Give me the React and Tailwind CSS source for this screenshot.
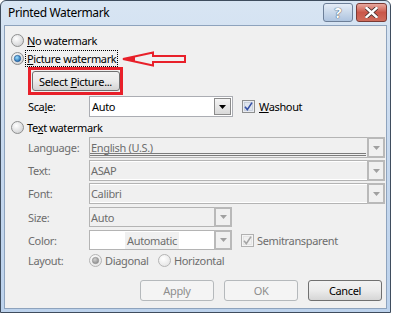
import React from "react";

const font = { fontFamily: '"Noto Sans", "Segoe UI", sans-serif' };

const Radio = ({ id, checked, disabled }) => (
  <svg width="13" height="13" viewBox="0 0 13 13" className="shrink-0">
    <defs>
      <radialGradient id={id + "bg"} cx="40%" cy="35%" r="70%">
        <stop offset="0" stopColor="#ffffff" />
        <stop offset="1" stopColor={disabled ? "#e4e4e4" : "#cfd0d2"} />
      </radialGradient>
      <radialGradient id={id + "dot"} cx="40%" cy="35%" r="70%">
        <stop offset="0" stopColor={disabled ? "#d0d0d0" : "#9ee0ff"} />
        <stop offset="1" stopColor={disabled ? "#8a8a8a" : "#145fa8"} />
      </radialGradient>
    </defs>
    <circle cx="6.5" cy="6.5" r="6" fill={`url(#${id}bg)`} stroke={disabled ? "#b4b4b4" : "#8e8f8f"} />
    {checked && <circle cx="6.5" cy="6.5" r="3.2" fill={`url(#${id}dot)`} stroke={disabled ? "#8f8f8f" : "#1b4f8a"} strokeWidth="0.6" />}
  </svg>
);

const Check = ({ disabled }) => (
  <svg width="13" height="13" viewBox="0 0 13 13" className="shrink-0">
    <rect x="0.5" y="0.5" width="12" height="12" fill={disabled ? "#f4f4f4" : "#e9ecf2"} stroke={disabled ? "#b1b1b1" : "#8e8f8f"} />
    <rect x="2.5" y="2.5" width="8" height="8" fill={disabled ? "#f0f0f0" : "#dfe5ee"} stroke={disabled ? "#e2e2e2" : "#c3cad6"} strokeWidth="0.8" />
    <path d="M3 6.8 L5.3 9.6 L10 2.6" fill="none" stroke={disabled ? "#a5a5a5" : "#3651a6"} strokeWidth="1.6" />
  </svg>
);

const Arrow = ({ disabled }) => (
  <svg width="7" height="4" viewBox="0 0 7 4">
    <path d="M0 0 H7 L3.5 4 Z" fill={disabled ? "#a0a0a0" : "#000"} />
  </svg>
);

const DisabledCombo = ({ value, width, variant }) => (
  <div className={`flex h-full border border-[#b4b4b4] bg-[#f0f0f0] ${width}`}>
    <div className={`relative flex flex-1 items-center pl-[1px] text-[#6d6d6d] ${variant === "white" ? "border-y border-white" : ""}`}>
      {value}
      {variant === "lang" && (
        <div className="absolute bottom-[1px] left-0 right-[1px] h-[3px] border-y border-[#7b7b7b]" />
      )}
    </div>
    <div className="-my-[1px] -mr-[1px] flex w-[18px] items-center justify-center border-2 border-[#b9b9b9]">
      <Arrow disabled />
    </div>
  </div>
);

const Label = ({ children, disabled }) => (
  <div className={`w-[61px] shrink-0 ${disabled ? "text-[#6d6d6d]" : "text-black"}`}>{children}</div>
);

const Button = ({ children, disabled }) => (
  <div
    className={`flex h-[21px] w-[74px] items-center justify-center rounded-[3px] border ${
      disabled
        ? "border-[#b5b9bc] bg-[#f4f4f4] text-[#8d8d8d]"
        : "border-[#707070] bg-gradient-to-b from-[#f2f2f2] via-[#ebebeb] to-[#d6d6d6] text-black"
    }`}
  >
    {children}
  </div>
);

export default function App() {
  return (
    <div className="h-[314px] w-[393px] bg-white text-[11px] leading-none tracking-[-0.35px]" style={font}>
      <div className="flex h-[313px] w-[391px] flex-col rounded-t-[6px] border border-[#3f4d5e] bg-gradient-to-b from-[#d8e5f3] via-[#c6d8ee] to-[#bcd2ec]">
        {/* title bar */}
        <div className="flex h-[24px] shrink-0 items-center justify-between pl-[7px] pr-[3px]">
          <span className="text-[12px] tracking-[-0.35px] text-black">Printed Watermark</span>
          <div className="flex gap-[3px] self-start pt-[2px]">
            <div className="flex h-[19px] w-[30px] items-center justify-center rounded-[3px] border border-[#6d7f98] bg-gradient-to-b from-[#e5edf7] via-[#c9d8ea] to-[#aec4df]">
              <span className="text-[14px] font-bold text-white [text-shadow:0_0_1px_#3c4a5c,0_0_1px_#3c4a5c]">?</span>
            </div>
            <div className="flex h-[19px] w-[31px] items-center justify-center rounded-[3px] border border-[#7a3a34] bg-gradient-to-b from-[#e8a89f] via-[#c9574a] to-[#cf6c5c]">
              <svg width="13" height="11" viewBox="0 0 13 11">
                <path d="M1.5 1 L11.5 10 M11.5 1 L1.5 10" stroke="#3c2a2a" strokeWidth="4" strokeLinecap="square" />
                <path d="M1.5 1 L11.5 10 M11.5 1 L1.5 10" stroke="#ffffff" strokeWidth="2.4" strokeLinecap="square" />
              </svg>
            </div>
          </div>
        </div>
        {/* body */}
        <div className="mx-[3px] mb-[3px] flex flex-1 flex-col border border-[#8ea3bd] bg-[#f0f0f0] pl-[6px] pt-[5px]">
          <div className="flex h-[19px] items-center gap-[3px]">
            <Radio id="r1" />
            <span><u>N</u>o watermark</span>
          </div>
          <div className="flex h-[17px] items-center gap-[1px]">
            <Radio id="r2" checked />
            <span className="flex h-[17px] items-center border border-dotted border-black px-[1px]">
              <u>P</u>icture watermark
            </span>
            <svg width="66" height="16" viewBox="0 0 66 16" className="ml-[2px]">
              <path d="M2 8 L32 1.5 V5 H64 V11 H32 V14.5 Z" fill="none" stroke="#e8202a" strokeWidth="2" strokeLinejoin="miter" />
              <path d="M2 8 L14 5.4 V10.6 Z" fill="#e8202a" />
            </svg>
          </div>
          <div className="ml-[17px] flex h-[28px] w-[95px] items-center justify-center border-[3px] border-[#e8202a]">
            <div className="flex h-[20px] w-[88px] items-center justify-center rounded-[3px] border border-[#707070] bg-gradient-to-b from-[#f2f2f2] via-[#ebebeb] to-[#d4d4d4]">
              Select <u className="ml-[3px]">P</u>icture...
            </div>
          </div>
          <div className="mt-[1px] flex h-[21px] items-center pl-[17px]">
            <Label>Sca<u>l</u>e:</Label>
            <div className="flex h-[21px] w-[144px] border border-[#abadb3] bg-white">
              <div className="flex flex-1 items-center pl-[2px]">Auto</div>
              <div className="m-[1px] flex w-[17px] items-center justify-center border border-[#8b8b8b] bg-gradient-to-b from-[#f4f4f4] to-[#d9d9d9]">
                <Arrow />
              </div>
            </div>
            <div className="ml-[9px] flex items-center gap-[4px]">
              <Check />
              <span><u>W</u>ashout</span>
            </div>
          </div>
          <div className="flex h-[20px] items-center gap-[3px]">
            <Radio id="r3" />
            <span>Te<u>x</u>t watermark</span>
          </div>
          <div className="flex h-[21px] items-center pl-[17px]">
            <Label disabled>Language:</Label>
            <DisabledCombo value="English (U.S.)" width="w-[296px]" variant="lang" />
          </div>
          <div className="mt-[2px] flex h-[21px] items-center pl-[17px]">
            <Label disabled>Text:</Label>
            <DisabledCombo value="ASAP" width="w-[296px]" variant="white" />
          </div>
          <div className="mt-[2px] flex h-[21px] items-center pl-[17px]">
            <Label disabled>Font:</Label>
            <DisabledCombo value="Calibri" width="w-[296px]" variant="white" />
          </div>
          <div className="mt-[3px] flex h-[20px] items-center pl-[17px]">
            <Label disabled>Size:</Label>
            <DisabledCombo value="Auto" width="w-[143px]" />
          </div>
          <div className="mt-[3px] flex h-[20px] items-center pl-[17px]">
            <Label disabled>Color:</Label>
            <div className="flex h-[20px] w-[143px] border border-[#b4b4b4] bg-white">
              <div className="flex flex-1 items-center justify-center">
                <span className="bg-[#f0f0f0] px-[2px] py-[3px] text-[#6d6d6d]">Automatic</span>
              </div>
              <div className="-my-[1px] -mr-[1px] flex w-[18px] items-center justify-center border-2 border-[#b9b9b9] bg-[#f0f0f0]">
                <Arrow disabled />
              </div>
            </div>
            <div className="ml-[9px] flex items-center gap-[3px] text-[#6d6d6d]">
              <Check disabled />
              <span>Semitransparent</span>
            </div>
          </div>
          <div className="flex h-[21px] items-center pl-[17px] text-[#6d6d6d]">
            <Label disabled>Layout:</Label>
            <div className="flex w-[69px] items-center gap-[3px]">
              <Radio id="r4" checked disabled />
              <span>Diagonal</span>
            </div>
            <div className="flex items-center gap-[3px]">
              <Radio id="r5" disabled />
              <span>Horizontal</span>
            </div>
          </div>
          <div className="mt-[9px] flex justify-end gap-[10px] pr-[4px]">
            <Button disabled>Apply</Button>
            <Button disabled>OK</Button>
            <Button>Cancel</Button>
          </div>
        </div>
      </div>
    </div>
  );
}
